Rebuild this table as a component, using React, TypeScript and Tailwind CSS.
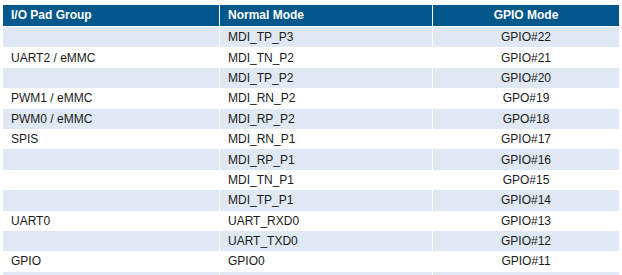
import React from 'react';

const rows: [string, string, string][] = [
  ['', 'MDI_TP_P3', 'GPIO#22'],
  ['UART2 / eMMC', 'MDI_TN_P2', 'GPIO#21'],
  ['', 'MDI_TP_P2', 'GPIO#20'],
  ['PWM1 / eMMC', 'MDI_RN_P2', 'GPO#19'],
  ['PWM0 / eMMC', 'MDI_RP_P2', 'GPO#18'],
  ['SPIS', 'MDI_RN_P1', 'GPIO#17'],
  ['', 'MDI_RP_P1', 'GPIO#16'],
  ['', 'MDI_TN_P1', 'GPO#15'],
  ['', 'MDI_TP_P1', 'GPIO#14'],
  ['UART0', 'UART_RXD0', 'GPIO#13'],
  ['', 'UART_TXD0', 'GPIO#12'],
  ['GPIO', 'GPIO0', 'GPIO#11'],
  ['', '', ''],
];

function App() {
  return (
    <div className="h-[275px] w-[622px] overflow-hidden bg-white pl-[3px] pr-[3px] pt-[5px] font-['Liberation_Sans',Arial,sans-serif] text-[12px] text-[#1a1a1a]">
      {/* Header */}
      <div className="grid h-[20.5px] grid-cols-[216px_212px_1fr] gap-x-px font-bold text-white">
        <div className="flex items-center bg-[#02578b] pl-2">I/O Pad Group</div>
        <div className="flex items-center bg-[#02578b] pl-2">Normal Mode</div>
        <div className="flex items-center justify-center bg-[#02578b]">GPIO Mode</div>
      </div>
      <div className="mt-[1.5px] flex flex-col">
        {rows.map((r, i) => {
          const bg = i % 2 === 0 ? 'bg-[#dfe8f3]' : 'bg-white';
          return (
            <div key={i} className="grid h-[20.4px] shrink-0 grid-cols-[216px_212px_1fr] gap-x-px">
              <div className={`flex items-center pl-2 ${bg}`}>{r[0]}</div>
              <div className={`flex items-center pl-2 ${bg}`}>{r[1]}</div>
              <div className={`flex items-center justify-center ${bg}`}>{r[2]}</div>
            </div>
          );
        })}
      </div>
    </div>
  );
}

export default App;
